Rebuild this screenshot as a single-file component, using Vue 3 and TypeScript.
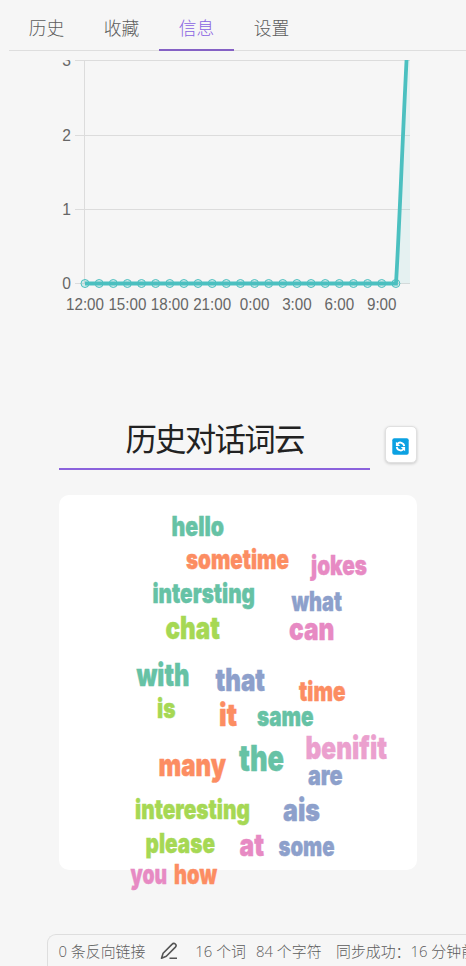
<script setup lang="ts">
import { ref } from 'vue'

interface Word {
  text: string
  x: number
  y: number
  width: number
  size: number
  color: string
}

const tabs: string[] = ['历史', '收藏', '信息', '设置']
const active = ref('信息')

const green = '#66c2a5'
const orange = '#fc8d62'
const blue = '#8da0cb'
const pink = '#e78ac3'
const lime = '#a6d854'

// Coordinates are relative to the top left corner of the cloud card.
const words: Word[] = [
  { text: 'hello', x: 112.5, y: 41, width: 52.5, size: 27, color: green },
  { text: 'sometime', x: 127, y: 74, width: 103, size: 27, color: orange },
  { text: 'jokes', x: 252, y: 80, width: 56, size: 27, color: pink },
  { text: 'intersting', x: 93.5, y: 108, width: 102.5, size: 27, color: green },
  { text: 'what', x: 232.5, y: 116, width: 50.5, size: 27, color: blue },
  { text: 'chat', x: 106.5, y: 144, width: 54.5, size: 31.5, color: lime },
  { text: 'can', x: 230, y: 145, width: 45.5, size: 31.5, color: pink },
  { text: 'with', x: 77.5, y: 191, width: 53, size: 31.5, color: green },
  { text: 'that', x: 156.5, y: 196, width: 49.5, size: 31.5, color: blue },
  { text: 'time', x: 240, y: 206, width: 46.5, size: 27, color: orange },
  { text: 'is', x: 98, y: 223, width: 18.5, size: 27, color: lime },
  { text: 'it', x: 160, y: 231, width: 18, size: 31.5, color: orange },
  { text: 'same', x: 198, y: 231, width: 56.5, size: 27, color: green },
  { text: 'benifit', x: 246.5, y: 264, width: 81.5, size: 31.5, color: '#eba0ce' },
  { text: 'the', x: 180, y: 276, width: 45, size: 36, color: green },
  { text: 'many', x: 99.5, y: 281, width: 67.5, size: 31.5, color: orange },
  { text: 'are', x: 249, y: 290, width: 34.5, size: 27, color: blue },
  { text: 'interesting', x: 76, y: 324, width: 115, size: 27, color: lime },
  { text: 'ais', x: 224, y: 326, width: 37, size: 31.5, color: blue },
  { text: 'please', x: 86.5, y: 358, width: 69.5, size: 27, color: lime },
  { text: 'at', x: 180.5, y: 361, width: 24.5, size: 31.5, color: pink },
  { text: 'some', x: 219.5, y: 361, width: 56, size: 27, color: blue },
  { text: 'you', x: 71.5, y: 389, width: 36.5, size: 27, color: pink },
  { text: 'how', x: 115, y: 389, width: 43, size: 27, color: orange },
]

const gridLines = [
  { label: '3', y: 0.5 },
  { label: '2', y: 75.5 },
  { label: '1', y: 149.5 },
  { label: '0', y: 223.5 },
]
const hours: string[] = ['12:00', '15:00', '18:00', '21:00', '0:00', '3:00', '6:00', '9:00']
const step = 14.13
const points: number[] = Array.from({ length: 23 }, (_, i) => 85 + i * step)
</script>

<template>
  <div class="panel">
    <nav class="tabs">
      <button
        v-for="tab in tabs"
        :key="tab"
        class="tab"
        :class="{ active: tab === active }"
        @click="active = tab"
      >{{ tab }}</button>
    </nav>

    <main class="content">
      <svg class="chart" width="466" height="270" viewBox="0 0 466 270">
        <g class="grid">
          <line v-for="g in gridLines" :key="g.label" x1="75" x2="410" :y1="g.y" :y2="g.y" />
          <line x1="84.5" x2="84.5" y1="0" y2="224" />
        </g>
        <g class="labels">
          <text v-for="g in gridLines" :key="g.label" x="71" :y="g.y + 5" text-anchor="end">{{ g.label }}</text>
          <text
            v-for="(h, i) in hours"
            :key="h"
            :x="85 + i * step * 3"
            y="250"
            text-anchor="middle"
            :textLength="h.length === 5 ? 38 : 29.6"
            lengthAdjust="spacingAndGlyphs"
          >{{ h }}</text>
        </g>
        <path class="area" d="M396 223.5C400 130 403 60 406.5 0H410V223.5Z" />
        <path class="line" d="M85 223.5H396C399.5 165 402 90 406.6 -1" />
        <circle v-for="p in points" :key="p" class="dot" :cx="p" cy="223.5" r="4" />
      </svg>

      <section class="cloud-section">
        <header class="heading">
          <h1 class="title">历史对话词云</h1>
          <button class="refresh" aria-label="刷新">
            <svg width="17" height="17" viewBox="0 0 17 17">
              <rect x=".3" y=".3" width="16.4" height="16.4" rx="2" fill="#0ba1e2" />
              <path d="M5.2 6A4 4 0 0 1 12.2 8.2M11.8 11A4 4 0 0 1 4.8 8.8" fill="none" stroke="#fff" stroke-width="1.9" />
              <path d="M3.9 3.8V8H8.2ZM13.1 13.2V9H8.8Z" fill="#fff" />
            </svg>
          </button>
        </header>
        <div class="cloud">
          <svg class="words" width="358" height="375" viewBox="0 0 358 375">
            <text
              v-for="w in words"
              :key="w.text"
              :x="w.x"
              :y="w.y"
              :font-size="w.size"
              :fill="w.color"
              :stroke="w.color"
              :textLength="w.width"
              lengthAdjust="spacingAndGlyphs"
            >{{ w.text }}</text>
          </svg>
        </div>
      </section>
    </main>

    <footer class="status">
      <span class="links">0 条反向链接</span>
      <svg class="pen" width="18" height="18" viewBox="0 0 18 18">
        <path d="M1.5 16.2 3.1 11.2 12.2 2.1A2 2 0 0 1 15.4 5.1L6.3 14.2ZM9.5 16.3H17" />
      </svg>
      <span class="count">16 个词</span>
      <span class="chars">84 个字符</span>
      <span class="sync">同步成功：16 分钟前</span>
    </footer>
  </div>
</template>

<style>
body {
  margin: 0;
  background: #f6f6f6;
  overflow: hidden;
}
</style>

<style scoped>
.panel {
  box-sizing: border-box;
  width: 466px;
  height: 966px;
  display: flex;
  flex-direction: column;
  overflow: hidden;
  background: #f6f6f6;
  color: #5c5c5c;
  font-family: "Open Sans", "Noto Sans CJK SC", sans-serif;
}
.tabs {
  display: flex;
  flex: none;
  box-sizing: border-box;
  height: 51px;
  margin-left: 9px;
  padding-top: 8px;
  border-bottom: 1px solid #dedede;
}
.tab {
  width: 75px;
  height: 43px;
  flex: none;
  padding: 0 0 2px;
  border: 0;
  border-bottom: 2px solid transparent;
  background: none;
  color: #5c5c5c;
  font: 300 17.8px/39px "Noto Sans CJK SC", sans-serif;
}
.tab.active {
  color: #8a63e2;
  border-bottom-color: #8561c5;
}
.content {
  flex: 1;
  margin-top: 9px;
  min-height: 0;
}
.chart {
  display: block;
}
.grid line {
  stroke: #dcdcdc;
}
.labels {
  fill: #666;
  font: 15.6px "Liberation Sans", Arial, sans-serif;
}
.area {
  fill: #4bc0c0;
  fill-opacity: 0.1;
}
.line {
  fill: none;
  stroke: #4bc0c0;
  stroke-width: 3.8;
}
.dot {
  fill: #4bc0c0;
  fill-opacity: 0.2;
  stroke: #4bc0c0;
  stroke-width: 1;
}
.cloud-section {
  width: 358px;
  margin-left: 59px;
  padding-top: 80px;
}
.heading {
  display: flex;
  justify-content: space-between;
  align-items: flex-start;
  height: 85px;
}
.title {
  box-sizing: border-box;
  width: 311px;
  height: 60px;
  margin: 0;
  border-bottom: 2px solid #8b62dc;
  color: #222;
  font: 400 31.5px/54px "Noto Sans CJK SC", sans-serif;
  letter-spacing: -1.8px;
  text-align: center;
}
.refresh {
  display: flex;
  box-sizing: border-box;
  width: 32px;
  height: 37px;
  margin-top: 16px;
  padding: 3px 1px 0 0;
  align-items: center;
  justify-content: center;
  border: 1px solid #e0e0e0;
  border-radius: 5px;
  background: #fff;
  box-shadow: 0 1px 3px rgb(0 0 0 / 18%);
}
.cloud {
  height: 375px;
  border-radius: 10px;
  background: #fff;
}
.words {
  display: block;
  overflow: visible;
  font-family: Inter, "Liberation Sans", sans-serif;
  font-weight: 900;
  stroke-width: 0.4px;
}
.status {
  display: flex;
  flex: none;
  align-items: center;
  box-sizing: border-box;
  width: 430px;
  height: 32px;
  margin-left: 47px;
  padding-left: 10.5px;
  border: solid #dedede;
  border-width: 1px 0 0 1px;
  border-radius: 9px 0 0;
  font: 300 14.9px/30px "Open Sans", "Noto Sans CJK SC", sans-serif;
  white-space: nowrap;
}
.pen {
  flex: none;
  margin: 0 17px 0 15px;
  fill: none;
  stroke: #555;
  stroke-width: 1.6;
  stroke-linejoin: round;
}
.chars {
  margin: 0 14.5px 0 10px;
}
</style>
